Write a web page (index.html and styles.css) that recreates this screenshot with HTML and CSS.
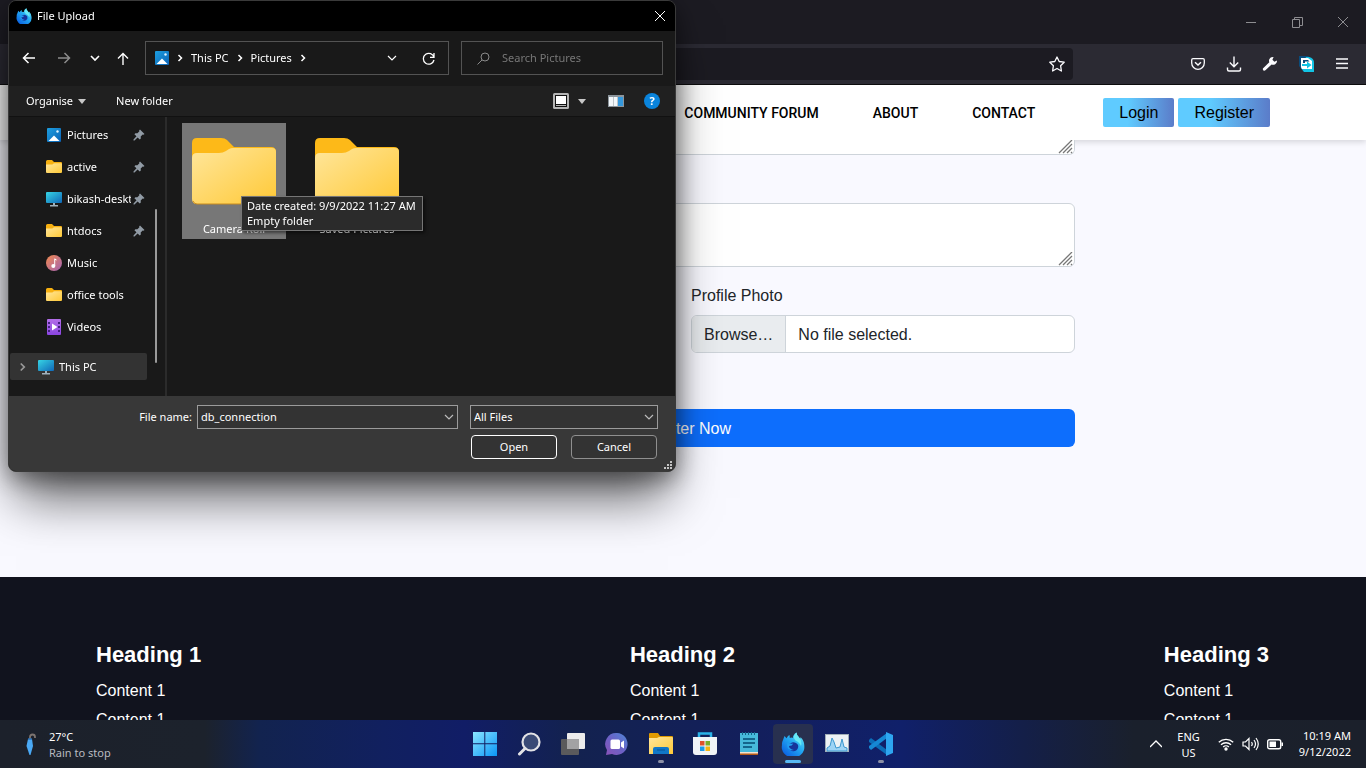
FILE: index.html
```html
<!DOCTYPE html>
<html lang="en">
<head>
<meta charset="utf-8">
<title>Register</title>
<link rel="stylesheet" href="styles.css">
</head>
<body class="desktop">
<svg class="defs" width="0" height="0" aria-hidden="true">
  <defs>
    <linearGradient id="gFolder" x1="0" y1="0" x2="1" y2="1"><stop offset="0" stop-color="#ffe69b"/><stop offset="1" stop-color="#ffc937"/></linearGradient>
    <linearGradient id="gPic" x1="0" y1="0" x2="1" y2="1"><stop offset="0" stop-color="#1d9fe0"/><stop offset="1" stop-color="#0b62b5"/></linearGradient>
    <linearGradient id="gPc" x1="0" y1="0" x2="1" y2="1"><stop offset="0" stop-color="#36d4e4"/><stop offset="1" stop-color="#1068b8"/></linearGradient>
    <linearGradient id="gMusic" x1="0" y1="0" x2="1" y2="1"><stop offset="0" stop-color="#f28a4e"/><stop offset="1" stop-color="#a262b4"/></linearGradient>
    <linearGradient id="gVideo" x1="0" y1="0" x2="0" y2="1"><stop offset="0" stop-color="#b36ee8"/><stop offset="1" stop-color="#8a45e0"/></linearGradient>
    <linearGradient id="gFox" x1="1" y1="0" x2="0.2" y2="1"><stop offset="0" stop-color="#6ff0f4"/><stop offset="0.5" stop-color="#22a8f2"/><stop offset="1" stop-color="#0a5de0"/></linearGradient>
    <linearGradient id="gWin" x1="0" y1="0" x2="1" y2="1"><stop offset="0" stop-color="#8be6ff"/><stop offset="1" stop-color="#0a95f7"/></linearGradient>
    <linearGradient id="gChat" x1="1" y1="0" x2="0" y2="1"><stop offset="0" stop-color="#4d86d6"/><stop offset="0.5" stop-color="#6b62c6"/><stop offset="1" stop-color="#8a52b8"/></linearGradient>
    <symbol id="folder" viewBox="0 0 84 67">
      <path d="M0 30V5q0-5 5-5h24q4 0 6 2l7 7h37q5 0 5 5v16z" fill="#fdb918"/>
      <path d="M0 20q0-5 5-5h22q4 0 7-2l3-2q2-1 4-1h39q4 0 4 4v47q0 5-5 5H5q-5 0-5-5z" fill="url(#gFolder)"/>
      <path d="M1 63q1 3 4 3h74q3 0 4-3" fill="none" stroke="#c98c1e"/>
    </symbol>
    <symbol id="folder-sm" viewBox="0 0 16 14">
      <path d="M0 7V1.500q0-1.500 1.500-1.500h4.500l2 2h7q1 0 1 1.200v4z" fill="#f7b010"/>
      <path d="M0 4.500h5.500q1 0 1.500-.6.500-.6 1.500-.6H15q1 0 1 1v7.700q0 1-1 1H1q-1 0-1-1z" fill="url(#gFolder)"/>
    </symbol>
    <symbol id="picture" viewBox="0 0 14 14"><rect width="14" height="14" rx="1" fill="url(#gPic)"/><path d="M1.500 13l5.500-5.500 5.500 5.500z" fill="#fff"/><circle cx="10.500" cy="3.500" r="1.200" fill="#dff3ff"/></symbol>
    <symbol id="pc" viewBox="0 0 16 16"><rect y="1" width="16" height="11" rx="1" fill="url(#gPc)"/><path d="M7 12h2v2h3v1.500H4V14h3z" fill="#9fb0bb"/></symbol>
    <symbol id="pin" viewBox="0 0 12 12"><path d="M7 .5l4.500 4.500-1 .8-.8-.2-2 2 .1 2-1 1-2.200-2.200L1.500 11.500H.5v-1l3-3.200L1.400 5.200l1-1 2 .1 2-2-.3-.9z" fill="#919ba5"/></symbol>
    <symbol id="chev-down" viewBox="0 0 10 10"><path d="M1 3l4 4 4-4" fill="none" stroke="currentColor" stroke-width="1.200"/></symbol>
    <symbol id="chev-right" viewBox="0 0 6 8"><path d="M1.500 1l3 3-3 3" fill="none" stroke="currentColor" stroke-width="1.500"/></symbol>
    <symbol id="close" viewBox="0 0 10 10"><path d="M0 0l10 10M10 0L0 10" fill="none" stroke="currentColor"/></symbol>
    <symbol id="grip" viewBox="0 0 16 14"><path d="M1 13L14 0M5 13l9-9M9 13l5-5M13 13l1-1" fill="none" stroke="#777" stroke-width="1.300"/></symbol>
    <symbol id="fox" viewBox="0 0 24 24">
      <path d="M2 8l1.500-4 2 2.200Q7 3.600 8.500 3l.3 3q1.600-.8 3 0Q12 2.500 15.500.5q.2 3 2.300 4.500L19 7l.6-1.800Q23.500 9 23.300 14A11.300 10.500 0 1 1 1 13Q.7 10.500 2 8z" fill="url(#gFox)"/>
      <path d="M7 12q2 .3 3-1 2-1.500 5 0 3 1.600 2 5-2 4-6 3-4-1.200-4-7z" fill="#16339b"/>
      <path d="M6.500 10.500q2 1.800 5.800 1-1 2.500-4.300 2.500.2 3 5 4-5 1-6.500-2.500-.8-2.300 0-5z" fill="#219df0"/>
      <path d="M15.500.5q.2 3 2.300 4.500Q21.500 9 20 14q-1.500-4-5.500-5.500Q12 6 13 3.500z" fill="#68e8f5"/>
    </symbol>
  </defs>
</svg>

<header class="titlebar">
  <button class="win-btn" aria-label="Minimise"><svg width="11" height="11"><path d="M0 5.500h10" stroke="currentColor"/></svg></button>
  <button class="win-btn" aria-label="Restore"><svg width="11" height="11" fill="none" stroke="currentColor"><path d="M.5 2.500h7v8h-7zM2.500 2.500v-2h8v8h-3"/></svg></button>
  <button class="win-btn" aria-label="Close"><svg width="10" height="10"><use href="#close"/></svg></button>
</header>

<div class="toolbar">
  <div class="urlbar"><button class="icon-btn" aria-label="Bookmark"><svg width="16" height="16" viewBox="0 0 16 16" fill="none" stroke="currentColor" stroke-width="1.300" stroke-linejoin="round"><path d="M8 1l2.200 4.500 5 .7-3.600 3.500.8 5.300L8 12.500 3.600 15l.8-5.300L.8 6.200l5-.7z"/></svg></button></div>
  <div class="tools">
    <button class="icon-btn" aria-label="Pocket"><svg width="16" height="16" viewBox="0 0 16 16" fill="none" stroke="currentColor" stroke-width="1.300"><path d="M3 2.700h10q1.300 0 1.300 1.300V7a6.300 6.300 0 0 1-12.600 0V4q0-1.300 1.300-1.300z"/><path d="M5 6.300L8 9l3-2.700" stroke-width="1.500"/></svg></button>
    <button class="icon-btn" aria-label="Downloads"><svg width="16" height="16" viewBox="0 0 16 16" fill="none" stroke="currentColor" stroke-width="1.400"><path d="M8 .5v10M3.800 6.500L8 10.700l4.200-4.200M1.500 11.500v2q0 1.500 1.500 1.500h10q1.500 0 1.500-1.500v-2"/></svg></button>
    <button class="icon-btn" aria-label="Developer tools"><svg width="16" height="16" viewBox="0 0 16 16" fill="currentColor"><path d="M15 4.500l-2.600 1.200-2-2L11.600 1Q8.500.8 7.300 3.200q-.6 1.500 0 3L1.400 12a1.400 1.400 0 0 0 2 2.300L9.600 8.600q1.800.6 3.600-.3Q15.300 7 15 4.500z"/></svg></button>
    <button class="icon-btn" aria-label="Extension"><svg width="16" height="16" viewBox="0 0 16 16"><path d="M1 0h9l6 5v11H6L1 10z" fill="#0a4c7c"/><path d="M8 1h3q5 1 5 6v9H6l-3-4z" fill="#12c4e4"/><path d="M3 2h7l4 3v8H4L3 11z" fill="#fff"/><path d="M5 4h5l1.500 1.500H7V7H5z" fill="#0a4c7c"/><path d="M4 8h5V5.500L13.500 9 9 12.500V10H4z" fill="#12c4e4"/></svg></button>
    <button class="icon-btn" aria-label="Menu"><svg width="14" height="16" stroke="currentColor" stroke-width="1.500"><path d="M1 3h12M1 7.500h12M1 12h12"/></svg></button>
  </div>
</div>

<main class="page">
  <header class="site-header">
    <nav class="site-nav"><a href="#">COMMUNITY FORUM</a><a href="#">ABOUT</a><a href="#">CONTACT</a></nav>
    <div class="auth"><button class="auth-btn">Login</button><button class="auth-btn">Register</button></div>
  </header>
  <form class="form">
    <div class="area area-top"><textarea aria-label="Address"></textarea><svg class="grip" width="16" height="14"><use href="#grip"/></svg></div>
    <div class="area"><textarea aria-label="Details"></textarea><svg class="grip" width="16" height="14"><use href="#grip"/></svg></div>
    <div class="photo-row">
      <div class="field">
        <label for="photo">Profile Photo</label>
        <label class="file" for="photo"><input id="photo" type="file" class="hidden-input"><span class="browse">Browse…</span><span class="chosen">No file selected.</span></label>
      </div>
    </div>
    <button class="submit" type="button">Register Now</button>
  </form>
  <footer class="footer">
    <section><h2>Heading 1</h2><p>Content 1</p><p>Content 1</p></section>
    <section><h2>Heading 2</h2><p>Content 1</p><p>Content 1</p></section>
    <section><h2>Heading 3</h2><p>Content 1</p><p>Content 1</p></section>
  </footer>
</main>

<div class="taskbar">
  <div class="weather">
    <svg width="12" height="24" viewBox="0 0 12 24"><path d="M5 6V4q0-2.500 2.500-2.500T10 4v1" fill="none" stroke="#7d7470" stroke-width="1.800"/><path d="M3 6h4l1 7-2.500 9h-1L1.500 13z" fill="#4aa9f5"/><path d="M3 6h4" stroke="#2b6fb5" stroke-width="1.500"/></svg>
    <div><div class="temp">27°C</div><div class="cond">Rain to stop</div></div>
  </div>
  <nav class="apps">
    <button class="app" aria-label="Start"><svg width="24" height="24"><path d="M0 0h11.300v11.300H0zM12.300 0H24v11.300H12.300zM0 12.300h11.300V24H0zM12.300 12.300H24V24H12.300z" fill="url(#gWin)"/></svg></button>
    <button class="app" aria-label="Search"><svg width="24" height="24"><circle cx="14" cy="10" r="8.500" fill="#3a4a76" stroke="#e2e2e6" stroke-width="2.200"/><path d="M8 16.500L2.500 22" stroke="#e2e2e6" stroke-width="3" stroke-linecap="round"/></svg></button>
    <button class="app" aria-label="Task view"><svg width="24" height="24"><rect x="6" y="1" width="18" height="16" rx="1" fill="#ececec"/><rect x="0" y="7" width="18" height="16" rx="1" fill="#5a5a5c"/><path d="M6 7h12v10H6z" fill="#a2a2a4"/></svg></button>
    <button class="app" aria-label="Chat"><svg width="24" height="24"><path d="M12 1a11 11 0 1 1-5 21L1 23l1-5A11 11 0 0 1 12 1z" fill="url(#gChat)"/><rect x="5.500" y="7.500" width="9.500" height="9.500" rx="1.500" fill="#fff"/><path d="M16 10.500l3-2v8l-3-2z" fill="#fff"/></svg></button>
    <button class="app running" aria-label="File Explorer"><svg width="24" height="24"><path d="M0 2q0-1 1-1h8l2 3h12q1 0 1 1v4H0z" fill="#e09a00"/><path d="M0 6h8l2-1h13q1 0 1 1v16H0z" fill="url(#gFolder)"/><path d="M4 22v-5q0-2 2-2h12q2 0 2 2v5z" fill="#1177c8"/><path d="M8 18h8" stroke="#075495"/></svg></button>
    <button class="app" aria-label="Store"><svg width="24" height="24"><path d="M6 6V1.500h12V6" fill="none" stroke="#2bb2e8" stroke-width="2.500"/><path d="M0 5h24v15q0 3-3 3H3q-3 0-3-3z" fill="#f1f4f7"/><path d="M7 9h4.500v4.500H7z" fill="#e0512b"/><path d="M12.500 9H17v4.500h-4.500z" fill="#7aad2a"/><path d="M7 14.500h4.500V19H7z" fill="#1d9be8"/><path d="M12.500 14.500H17V19h-4.500z" fill="#f6b511"/></svg></button>
    <button class="app" aria-label="Notepad"><svg width="20" height="24"><path d="M1 1h18v20H1z" fill="#46b9da"/><path d="M1 21h18v2H1z" fill="#b45a17"/><path d="M1 20h18v1.500H1z" fill="#f0e3d0"/><path d="M3.500 0v3M6.500 0v3M9.500 0v3M12.500 0v3M15.500 0v3" stroke="#136489"/><path d="M4 7h12M4 11h12M4 15h9" stroke="#14668c" stroke-width="2"/></svg></button>
    <button class="app running active" aria-label="Firefox"><svg width="24" height="24"><use href="#fox"/></svg></button>
    <button class="app" aria-label="Performance Monitor"><svg width="24" height="20"><rect x=".5" y=".5" width="23" height="17" fill="#edf2f5" stroke="#a2afb8"/><path d="M2 14l3-2 2-8 2 4 2 6 4-1 2-8 2 8 3 1v3H2z" fill="#9ed4f5" stroke="#3b97cf"/></svg></button>
    <button class="app running" aria-label="Visual Studio Code"><svg width="24" height="24"><path d="M0 8l2-2 16 12v5L0 10z" fill="#0b6db8"/><path d="M0 16l2 2L18 6V1L0 14z" fill="#1688d4"/><path d="M17 0l7 3v18l-7 3z" fill="#2ea6f0"/></svg></button>
  </nav>
  <div class="tray">
    <button class="tray-btn" aria-label="Show hidden icons"><svg width="12" height="8"><path d="M0 7l6-6 6 6" fill="none" stroke="currentColor" stroke-width="1.300"/></svg></button>
    <div class="lang">ENG<br>US</div>
    <div class="status">
      <svg width="16" height="14" viewBox="0 0 16 14" fill="none" stroke="currentColor" stroke-width="1.400"><path d="M.8 5.200a10.500 10.500 0 0 1 14.400 0M3 7.700a7.300 7.300 0 0 1 10 0M5.200 10a4 4 0 0 1 5.600 0"/><circle cx="8" cy="12" r="1" fill="currentColor"/></svg>
      <svg width="17" height="14" viewBox="0 0 17 14" fill="none" stroke="currentColor" stroke-width="1.200"><path d="M1 5h2.500L7 1.500v11L3.500 9H1zM9.500 5q1.500 2 0 4M12 3q3 4 0 8M14 1q4.500 6 0 12"/></svg>
      <svg width="17" height="12" viewBox="0 0 17 12"><rect x=".7" y="1.700" width="13" height="9" rx="1.800" fill="none" stroke="currentColor" stroke-width="1.400"/><path d="M2.500 3.500H9v5.500H2.500zM14.500 4.500h1.500v3.500h-1.500z" fill="currentColor"/></svg>
    </div>
    <div class="clock">10:19 AM<br>9/12/2022</div>
  </div>
</div>

<div class="dialog" role="dialog" aria-label="File Upload">
  <div class="dlg-title"><svg width="16" height="16"><use href="#fox"/></svg><span>File Upload</span><button class="dlg-close" aria-label="Close dialog"><svg width="10" height="10"><use href="#close"/></svg></button></div>
  <div class="dlg-nav">
    <div class="nav-btns">
      <button aria-label="Back"><svg width="14" height="12" fill="none" stroke="currentColor" stroke-width="1.500"><path d="M13 6H1.500M6.500 1l-5 5 5 5"/></svg></button>
      <button class="dim" aria-label="Forward"><svg width="14" height="12" fill="none" stroke="currentColor" stroke-width="1.500"><path d="M1 6h11.500M7.500 1l5 5-5 5"/></svg></button>
      <button aria-label="Recent locations"><svg width="10" height="10" fill="none" stroke="currentColor" stroke-width="1.600"><path d="M1 3l4 4 4-4"/></svg></button>
      <button aria-label="Up"><svg width="12" height="13" fill="none" stroke="currentColor" stroke-width="1.400"><path d="M6 13V1.500M1 6.500l5-5 5 5"/></svg></button>
    </div>
    <div class="address">
      <svg width="14" height="14"><use href="#picture"/></svg>
      <svg width="6" height="8"><use href="#chev-right"/></svg><span>This PC</span>
      <svg width="6" height="8"><use href="#chev-right"/></svg><span>Pictures</span>
      <svg width="6" height="8"><use href="#chev-right"/></svg>
      <div class="address-end">
        <button aria-label="Previous locations"><svg width="10" height="10"><use href="#chev-down"/></svg></button>
        <button aria-label="Refresh"><svg width="13" height="13" fill="none" stroke="currentColor" stroke-width="1.300"><path d="M12 5.500A5.400 5.400 0 1 0 12 8M12 1v4.300H8"/></svg></button>
      </div>
    </div>
    <div class="search"><svg width="13" height="13" fill="none" stroke="#8a8a8a"><circle cx="8" cy="5" r="4"/><path d="M5 8L.5 12.500"/></svg><input type="search" placeholder="Search Pictures" aria-label="Search Pictures"></div>
  </div>
  <div class="dlg-cmd">
    <button>Organise<i class="tri"></i></button><button>New folder</button>
    <div class="cmd-end">
      <button aria-label="Change view"><svg width="16" height="16"><rect width="16" height="16" rx="1.500" fill="#b4b4b4"/><rect x="2" y="2" width="12" height="12" fill="#111"/><rect x="3" y="3" width="10" height="8" fill="#fff"/><path d="M3 12.500h10" stroke="#b4b4b4"/></svg><i class="tri"></i></button>
      <button aria-label="Preview pane"><svg width="16" height="12"><rect width="16" height="12" fill="#8c959c"/><path d="M1 2h4v9H1zM5.500 2h4v9h-4z" fill="#f3f7fa"/><path d="M10 2h5v9h-5z" fill="#3498dc"/></svg></button>
      <button class="help" aria-label="Help">?</button>
    </div>
  </div>
  <div class="dlg-body">
    <div class="side">
      <div class="side-list">
        <a class="place" href="#"><svg width="16" height="14"><use href="#picture"/></svg><span>Pictures</span><svg width="12" height="12"><use href="#pin"/></svg></a>
        <a class="place" href="#"><svg width="16" height="14"><use href="#folder-sm"/></svg><span>active</span><svg width="12" height="12"><use href="#pin"/></svg></a>
        <a class="place" href="#"><svg width="16" height="16"><use href="#pc"/></svg><span>bikash-desktop</span><svg width="12" height="12"><use href="#pin"/></svg></a>
        <a class="place" href="#"><svg width="16" height="14"><use href="#folder-sm"/></svg><span>htdocs</span><svg width="12" height="12"><use href="#pin"/></svg></a>
        <a class="place" href="#"><svg width="16" height="16"><circle cx="8" cy="8" r="8" fill="url(#gMusic)"/><path d="M8.200 11V3.500q2.500 0 2.600 2-1-.6-1.600-.5V11" fill="#fff"/><circle cx="7.300" cy="11" r="2" fill="#fff"/></svg><span>Music</span></a>
        <a class="place" href="#"><svg width="16" height="14"><use href="#folder-sm"/></svg><span>office tools</span></a>
        <a class="place" href="#"><svg width="16" height="16"><rect x="1" width="14" height="16" rx="1" fill="url(#gVideo)"/><path d="M6 4.500v7L11.500 8z" fill="#fff"/><path d="M3 3v11M13 3v11" stroke="#43207e" stroke-width="2" stroke-dasharray="2 2"/></svg><span>Videos</span></a>
        <a class="this-pc" href="#"><svg class="expand" width="7" height="10"><use href="#chev-right"/></svg><svg width="16" height="16"><use href="#pc"/></svg><span>This PC</span></a>
      </div>
      <div class="scroll"></div>
    </div>
    <div class="files">
      <div class="file-tile selected"><svg width="84" height="67"><use href="#folder"/></svg><span>Camera Roll</span></div>
      <div class="file-tile"><svg width="84" height="67"><use href="#folder"/></svg><span>Saved Pictures</span></div>
      <div class="tooltip" role="tooltip">Date created: 9/9/2022 11:27 AM<br>Empty folder</div>
    </div>
  </div>
  <div class="dlg-foot">
    <label class="name-label" for="fname">File name:</label>
    <div class="combo"><input id="fname" type="text" value="db_connection"><svg width="10" height="10"><use href="#chev-down"/></svg></div>
    <div class="combo"><select aria-label="File type"><option>All Files</option></select><svg width="10" height="10"><use href="#chev-down"/></svg></div>
    <div class="actions"><button class="primary">Open</button><button>Cancel</button></div>
    <svg class="dlg-grip" width="8" height="8" fill="#c4c4c4"><path d="M6 0h2v2H6zM3 3h2v2H3zM6 3h2v2H6zM0 6h2v2H0zM3 6h2v2H3zM6 6h2v2H6z"/></svg>
  </div>
</div>
</body>
</html>
```

FILE: styles.css
```css
* { box-sizing: border-box; }
.desktop {
  margin: 0;
  height: 100vh;
  display: flex;
  flex-direction: column;
  position: relative;
  overflow: hidden;
  background: #f9f9ff;
  font: 16px/24px "Liberation Sans", Arial, sans-serif;
  color: #212529;
}
.defs { position: absolute; }
svg { display: block; flex: none; }
button { font: inherit; color: inherit; border: 0; padding: 0; background: none; display: flex; align-items: center; justify-content: center; }
a { color: inherit; text-decoration: none; }

/* Browser chrome */
.titlebar { flex: none; height: 44px; background: #1c1b22; color: #8d8d91; display: flex; justify-content: flex-end; }
.win-btn { width: 46px; }
.toolbar { flex: none; height: 41px; background: #2b2a33; border-bottom: 1px solid #0c0c0d; color: #fbfbfe; display: flex; padding: 4px 8px 4px 291px; }
.urlbar { flex: 1; background: #1c1b22; border-radius: 4px; display: flex; justify-content: flex-end; }
.icon-btn { width: 32px; }
.tools { display: flex; gap: 4px; margin-left: 109px; }

/* Web page */
.page { flex: 1; min-height: 0; overflow: hidden; display: flex; flex-direction: column; }
.site-header { flex: none; position: relative; background: #fff; padding: 13px 96px; display: flex; justify-content: flex-end; align-items: center; gap: 68px; box-shadow: 0 2px 6px rgba(0, 0, 0, .15); color: #000; }
.site-nav { display: flex; gap: 54px; font: 500 14px/24px Roboto, sans-serif; }
.auth { display: flex; gap: 4px; }
.auth-btn { height: 29px; padding: 0 16px; border-radius: 2px; background: linear-gradient(90deg, #5fcbff 35%, #5b7cc9); }
.form { flex: none; width: 784px; max-width: 100%; margin: 0 auto; padding-bottom: 130px; display: flex; flex-direction: column; }
.area { position: relative; display: flex; margin-bottom: 16px; }
.area-top { margin-bottom: 48px; }
.area textarea { width: 100%; height: 64px; border: 1px solid #ced4da; border-radius: 6px; background: #fff; resize: none; }
.area-top textarea { height: 15px; border-top: 0; border-radius: 0 0 6px 6px; }
.grip { position: absolute; right: 1px; bottom: 1px; }
.photo-row { display: grid; grid-template-columns: 1fr 1fr; gap: 16px; }
.field { grid-column: 2; display: flex; flex-direction: column; gap: 6px; line-height: 26px; }
.file { display: flex; height: 38px; border: 1px solid #ced4da; border-radius: 6px; background: #fff; overflow: hidden; position: relative; line-height: 38px; }
.hidden-input { position: absolute; inset: 0; opacity: 0; }
.browse { padding: 0 12px; background: #e9ecef; border-right: 1px solid #ced4da; }
.chosen { padding: 0 12px; }
.submit { height: 38px; margin-top: 56px; padding-top: 2px; border-radius: 6px; background: #0d6efd; color: #fff; }
.footer { flex: 1 0 auto; background: #11131e; color: #fff; padding: 63px 97px 0 96px; display: flex; justify-content: space-between; }
.footer h2 { margin: 0 0 8px; font-size: 22px; line-height: 30px; }
.footer p { margin: 0 0 4px; line-height: 25px; }

/* Taskbar */
.taskbar {
  flex: none; height: 48px; position: relative; z-index: 1; color: #fff;
  display: grid; grid-template-columns: 1fr auto 1fr; align-items: center;
  font: 11px/16px "Noto Sans", sans-serif;
  background: linear-gradient(90deg, #1c212b 0, #1c222c 15%, #12234f 19%, #11205f 28%, #111d66 34%, #13224f 42%, #131f5c 55%, #10206a 66%, #141f48 75%, #1a202c 83%, #1b202b 100%);
}
.weather { display: flex; align-items: center; gap: 12px; padding: 2px 0 0 25px; }
.cond { color: #b9bbc0; }
.apps { display: flex; gap: 4px; }
.app { position: relative; width: 40px; height: 40px; border-radius: 4px; }
.app.active { background: #28304f; }
.running::after { content: ""; position: absolute; bottom: 1px; left: 17px; width: 6px; height: 3px; border-radius: 2px; background: #8c90a6; }
.active::after { left: 12px; width: 16px; background: #58b9f5; }
.tray { display: flex; justify-content: flex-end; align-items: center; padding-right: 15px; }
.lang { text-align: center; margin: 2px 18px 0 15px; }
.status { display: flex; align-items: center; gap: 8px; }
.clock { text-align: right; margin-left: 15px; }

/* File dialog */
.dialog {
  position: absolute; left: 8px; top: 0; z-index: 2; width: 668px; color: #fff;
  border: 1px solid #3a3a3a; border-radius: 8px; overflow: hidden; background: #191919;
  box-shadow: 0 34px 48px -8px rgba(0, 0, 0, .6), 0 6px 24px rgba(0, 0, 0, .45);
  font: 11px/16px "Noto Sans", sans-serif;
}
.dlg-title { background: #000; height: 30px; display: flex; align-items: center; gap: 5px; padding: 0 10px 0 7px; }
.dlg-close { margin-left: auto; }
.dlg-nav { display: flex; padding: 10px 12px 11px 3px; }
.nav-btns { display: grid; grid-template-columns: 34px 36px 26px 30px; margin-right: 7px; }
.dim { color: #8c8c8c; }
.address { flex: 1; height: 34px; border: 1px solid #535353; display: flex; align-items: center; gap: 8px; padding: 0 13px 0 9px; }
.address-end { margin-left: auto; display: flex; gap: 25px; }
.search { width: 202px; margin-left: 12px; border: 1px solid #535353; display: flex; align-items: center; gap: 12px; padding: 0 15px; }
.search input { flex: 1; min-width: 0; border: 0; padding: 0; outline: 0; background: none; font: inherit; color: #fff; }
.search input::placeholder { color: #777; opacity: 1; }
.dlg-cmd { background: #202020; height: 30px; display: flex; align-items: center; gap: 30px; padding: 0 15px 0 17px; }
.tri { border: 4px solid transparent; border-top: 5px solid #c8c8c8; border-bottom: 0; margin-left: 5px; }
.cmd-end { margin-left: auto; display: flex; align-items: center; gap: 20px; }
.cmd-end .tri { margin: 0 2px 0 9px; }
.help { width: 16px; height: 16px; border-radius: 8px; background: #0a84dc; font-weight: 700; }
.dlg-body { display: flex; height: 280px; border-top: 1px solid #111; }
.side { width: 158px; border-right: 2px solid #2b2b2b; display: flex; }
.side-list { width: 138px; padding-top: 2px; }
.place { height: 32px; display: flex; align-items: center; gap: 5px; padding: 0 2px 0 37px; }
.place span { flex: 1; min-width: 0; overflow: hidden; white-space: nowrap; }
.place svg + span + svg { margin-left: -3px; }
.this-pc { height: 27px; margin: 10px 0 0 1px; background: #333; border-radius: 2px; display: flex; align-items: center; gap: 5px; padding-left: 9px; }
.expand { color: #999; margin-right: 7px; }
.scroll { width: 2px; height: 154px; margin: 92px 0 0 8px; background: #9a9a9a; border-radius: 1px; }
.files { position: relative; flex: 1; display: flex; align-items: flex-start; gap: 19px; padding: 6px 0 0 15px; }
.file-tile { width: 104px; height: 116px; padding: 15px 0 2px; display: flex; flex-direction: column; align-items: center; justify-content: space-between; }
.selected { background: #777; }
.tooltip { position: absolute; left: 74px; top: 79px; padding: 1px 6px 2px 5px; background: #2b2b2b; border: 1px solid #767676; box-shadow: 2px 2px 3px rgba(0, 0, 0, .5); line-height: 15px; white-space: nowrap; }
.dlg-foot {
  position: relative; background: #383838; min-height: 75px; padding: 9px 17px 12px;
  display: grid; grid-template-columns: 1fr 261px 188px; column-gap: 12px; row-gap: 6px; align-items: start;
}
.name-label { text-align: right; line-height: 24px; margin-right: -7px; }
.combo { position: relative; display: flex; height: 24px; }
.combo input, .combo select { appearance: none; width: 100%; border: 1px solid #9b9b9b; border-radius: 0; background: #333; color: #fff; font: inherit; padding: 0 3px; }
.combo svg { position: absolute; right: 4px; top: 7px; color: #bbb; }
.actions { grid-column: 3; display: grid; grid-template-columns: 1fr 1fr; gap: 14px; padding: 0 1px; }
.actions button { height: 24px; border: 1px solid #8f8f8f; border-radius: 4px; background: #333; }
.actions .primary { border-color: #fff; }
.dlg-grip { position: absolute; right: 3px; bottom: 2px; }
```
